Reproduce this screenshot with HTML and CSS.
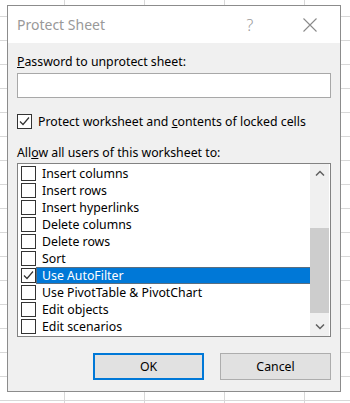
FILE: index.html
```html
<!DOCTYPE html>
<html lang="en">
<head>
    <meta charset="UTF-8">
    <title>Protect Sheet</title>
    <link rel="stylesheet" href="styles.css">
</head>
<body>
    <div class="dialog">
        <div class="titlebar">
            <span class="title">Protect Sheet</span>
            <span class="help">?</span>
            <span class="close">
                <svg width="14" height="14" viewBox="0 0 14 14"><path d="M0.5 0.5 L13.5 13.5 M13.5 0.5 L0.5 13.5" stroke="#8a8a8a" stroke-width="1.1" fill="none"/></svg>
            </span>
        </div>

        <div class="content">
            <div class="label"><u>P</u>assword to unprotect sheet:</div>
            <div class="textbox"></div>

            <div class="check-row">
                <span class="box checked">
                    <svg width="13" height="13" viewBox="0 0 13 13"><path d="M2 6.5 L5 9.5 L11 2.5" stroke="#333" stroke-width="1.2" fill="none"/></svg>
                </span>
                <span>Protect worksheet and <u>c</u>ontents of locked cells</span>
            </div>

            <div class="label allow">All<u>o</u>w all users of this worksheet to:</div>

            <div class="listbox">
                <ul class="items">
                    <li><span class="box"></span><span class="text">Insert columns</span></li>
                    <li><span class="box"></span><span class="text">Insert rows</span></li>
                    <li><span class="box"></span><span class="text">Insert hyperlinks</span></li>
                    <li><span class="box"></span><span class="text">Delete columns</span></li>
                    <li><span class="box"></span><span class="text">Delete rows</span></li>
                    <li><span class="box"></span><span class="text">Sort</span></li>
                    <li class="selected">
                        <span class="box checked">
                            <svg width="13" height="13" viewBox="0 0 13 13"><path d="M2 6.5 L5 9.5 L11 2.5" stroke="#333" stroke-width="1.2" fill="none"/></svg>
                        </span>
                        <span class="text">Use AutoFilter</span>
                    </li>
                    <li><span class="box"></span><span class="text">Use PivotTable &amp; PivotChart</span></li>
                    <li><span class="box"></span><span class="text">Edit objects</span></li>
                    <li><span class="box"></span><span class="text">Edit scenarios</span></li>
                </ul>
                <div class="scrollbar">
                    <div class="arrow">
                        <svg width="10" height="6" viewBox="0 0 10 6"><path d="M1 5.5 L5 1.5 L9 5.5" stroke="#606060" stroke-width="1.5" fill="none"/></svg>
                    </div>
                    <div class="track">
                        <div class="thumb"></div>
                    </div>
                    <div class="arrow">
                        <svg width="10" height="6" viewBox="0 0 10 6"><path d="M1 0.5 L5 4.5 L9 0.5" stroke="#606060" stroke-width="1.5" fill="none"/></svg>
                    </div>
                </div>
            </div>

            <div class="buttons">
                <button class="btn default">OK</button>
                <button class="btn">Cancel</button>
            </div>
        </div>
    </div>
</body>
</html>
```

FILE: styles.css
```css
html, body {
    margin: 0;
    height: 100%;
}
body {
    font-family: "Noto Sans", sans-serif;
    font-size: 12.3px;
    color: #000;
    background-color: #fff;
    background-image:
        linear-gradient(to right, #d8d8d8 1px, transparent 1px),
        linear-gradient(to bottom, #d8d8d8 1px, transparent 1px);
    background-size: 80px 24px;
    background-position: 64px 16px;
    overflow: hidden;
}
.dialog {
    margin: 5px 0 0 7px;
    width: 334px;
    height: 387px;
    box-sizing: border-box;
    border: 1px solid #8c8c8c;
    background: #f0f0f0;
    display: flex;
    flex-direction: column;
}
.titlebar {
    height: 37px;
    background: #fff;
    display: flex;
    align-items: center;
    padding-left: 9px;
    color: #999;
}
.title {
    font-size: 14px;
    flex: 1;
    margin-top: -1px;
}
.help {
    font-size: 16px;
    width: 14px;
    text-align: center;
    margin-right: 46px;
    font-weight: 300;
}
.close {
    display: flex;
    margin-right: 23px;
}
.content {
    padding: 10px 9px 0 9px;
    display: flex;
    flex-direction: column;
}
.label {
    line-height: 17px;
}
.textbox {
    margin-top: 3px;
    height: 25px;
    box-sizing: border-box;
    border: 1px solid #a8a8a8;
    background: #fff;
}
.check-row {
    margin-top: 15px;
    display: flex;
    align-items: center;
    gap: 6px;
    line-height: 17px;
}
.box {
    width: 15px;
    height: 15px;
    box-sizing: border-box;
    border: 1px solid #333;
    background: #fff;
    display: flex;
    align-items: center;
    justify-content: center;
    flex-shrink: 0;
}
.allow {
    margin-top: 14px;
}
.listbox {
    margin-top: 2px;
    height: 174px;
    box-sizing: border-box;
    border: 1px solid #828282;
    background: #fff;
    display: flex;
}
.items {
    list-style: none;
    margin: 0;
    padding: 1px 0 0 0;
    flex: 1;
}
.items li {
    height: 17px;
    display: flex;
    align-items: center;
    padding-left: 3px;
}
.items .text {
    margin-left: 1px;
    padding-left: 5px;
    flex: 1;
    line-height: 15px;
}
.items li.selected .text {
    background: #0078d7;
    color: #fff;
    box-shadow: 0 0 0 1px #5a6e80;
}
.scrollbar {
    width: 19px;
    margin-right: 1px;
    background: #f0f0f0;
    display: flex;
    flex-direction: column;
}
.arrow {
    height: 18px;
    display: flex;
    align-items: center;
    justify-content: center;
}
.track {
    flex: 1;
    padding-top: 46px;
}
.thumb {
    height: 85px;
    background: #cdcdcd;
}
.buttons {
    margin-top: 16px;
    display: flex;
    justify-content: flex-end;
    gap: 16px;
}
.btn {
    width: 111px;
    height: 27px;
    box-sizing: border-box;
    font-family: "Noto Sans", sans-serif;
    font-size: 12.3px;
    color: #000;
    background: #e1e1e1;
    border: 1px solid #adadad;
    padding: 0;
}
.btn.default {
    border: 2px solid #0078d7;
}
```
